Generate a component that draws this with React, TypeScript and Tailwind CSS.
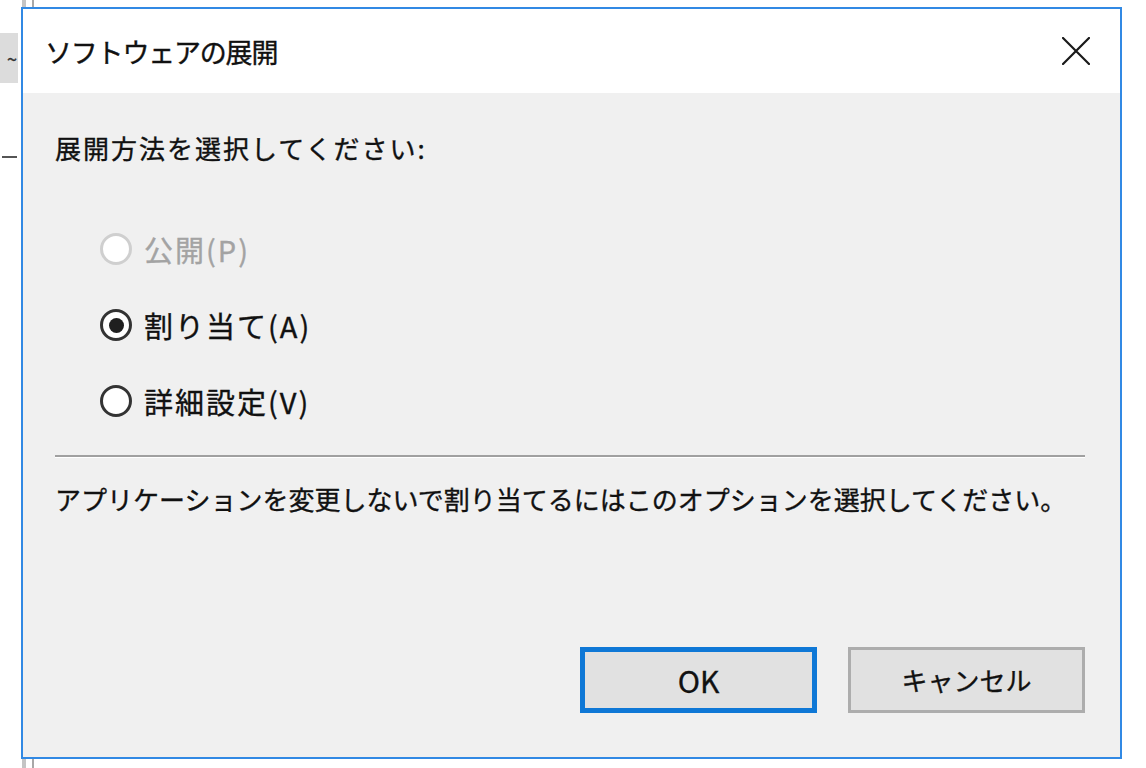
import React from "react";

type RadioProps = { checked?: boolean; disabled?: boolean };

function RadioMark({ checked, disabled }: RadioProps) {
  return (
    <span
      className={
        disabled
          ? "flex h-[32px] w-[32px] shrink-0 items-center justify-center rounded-full border-[3px] border-[#cfcfcf] bg-white"
          : "flex h-[32px] w-[32px] shrink-0 items-center justify-center rounded-full border-[3px] border-[#333333] bg-white"
      }
    >
      {checked && <span className="h-[15px] w-[15px] rounded-full bg-[#1f1f1f]" />}
    </span>
  );
}

function RadioRow({ label, checked, disabled }: RadioProps & { label: string }) {
  return (
    <label className="flex h-[40px] items-center gap-[12px]">
      <RadioMark checked={checked} disabled={disabled} />
      <span
        className={
          disabled
            ? "text-[29px] tracking-[2px] text-[#a3a3a3]"
            : "text-[29px] tracking-[2px] text-[#111111]"
        }
      >
        {label}
      </span>
    </label>
  );
}

function CloseGlyph() {
  return (
    <svg width="28" height="28" viewBox="0 0 28 28" fill="none">
      <path d="M1 1 L27 27 M27 1 L1 27" stroke="#1a1a1a" strokeWidth="2.2" strokeLinecap="square" />
    </svg>
  );
}

export default function App() {
  return (
    <div className="relative h-[768px] w-[1146px] overflow-hidden bg-white font-['Noto_Sans_CJK_JP','Noto_Sans',sans-serif] text-[26px] leading-none text-[#111111] [-webkit-text-stroke:0.35px_currentColor]">
      {/* bits of the window sitting behind the dialog */}
      <div className="absolute left-0 top-[33px] flex h-[50px] w-[18px] items-center justify-end bg-[#dcdcdc] pr-[1px] text-[18px] text-[#333333]">
        ~
      </div>
      <div className="absolute left-[2px] top-[156px] h-[2px] w-[15px] bg-[#555555]" />
      <div className="absolute left-[22px] top-0 h-[8px] w-[4px] bg-[#c4c4c4]" />
      <div className="absolute left-[32px] top-0 h-[8px] w-[2px] bg-[#a8a8a8]" />
      <div className="absolute bottom-0 left-[22px] h-[9px] w-[4px] bg-[#c4c4c4]" />
      <div className="absolute bottom-0 left-[32px] h-[9px] w-[2px] bg-[#a8a8a8]" />

      {/* dialog window */}
      <div className="relative ml-[21px] mt-[7px] flex h-[752px] w-[1101px] flex-col border-2 border-[#3189e4] bg-[#f0f0f0]">
        <div className="flex h-[84px] items-center justify-between bg-white pl-[22px] pr-[30px]">
          <span className="text-[27px] tracking-[-1.2px] text-[#111111]">ソフトウェアの展開</span>
          <CloseGlyph />
        </div>

        <div className="flex flex-1 flex-col pl-[32px] pr-[35px]">
          <div className="mt-[35px] flex h-[40px] items-center tracking-[2px]">
            展開方法を選択してください:
          </div>

          <div className="mt-[61px] flex flex-col gap-[36px] pl-[45px]">
            <RadioRow label="公開(P)" disabled />
            <RadioRow label="割り当て(A)" checked />
            <RadioRow label="詳細設定(V)" />
          </div>

          <div className="mt-[34px] h-[2px] bg-[#a0a0a0]" />
          <div className="h-[1px] bg-white" />

          <div className="mt-[21px] flex h-[40px] items-center">
            アプリケーションを変更しないで割り当てるにはこのオプションを選択してください。
          </div>

          <div className="mt-auto mb-[44px] flex justify-end gap-[31px]">
            <button className="flex h-[66px] w-[237px] items-center justify-center border-[5px] border-[#0f78d6] bg-[#e1e1e1] text-[30px] text-[#111111]">
              OK
            </button>
            <button className="flex h-[66px] w-[237px] items-center justify-center border-[3px] border-[#adadad] bg-[#e1e1e1] text-[26px] text-[#111111]">
              キャンセル
            </button>
          </div>
        </div>
      </div>
    </div>
  );
}
